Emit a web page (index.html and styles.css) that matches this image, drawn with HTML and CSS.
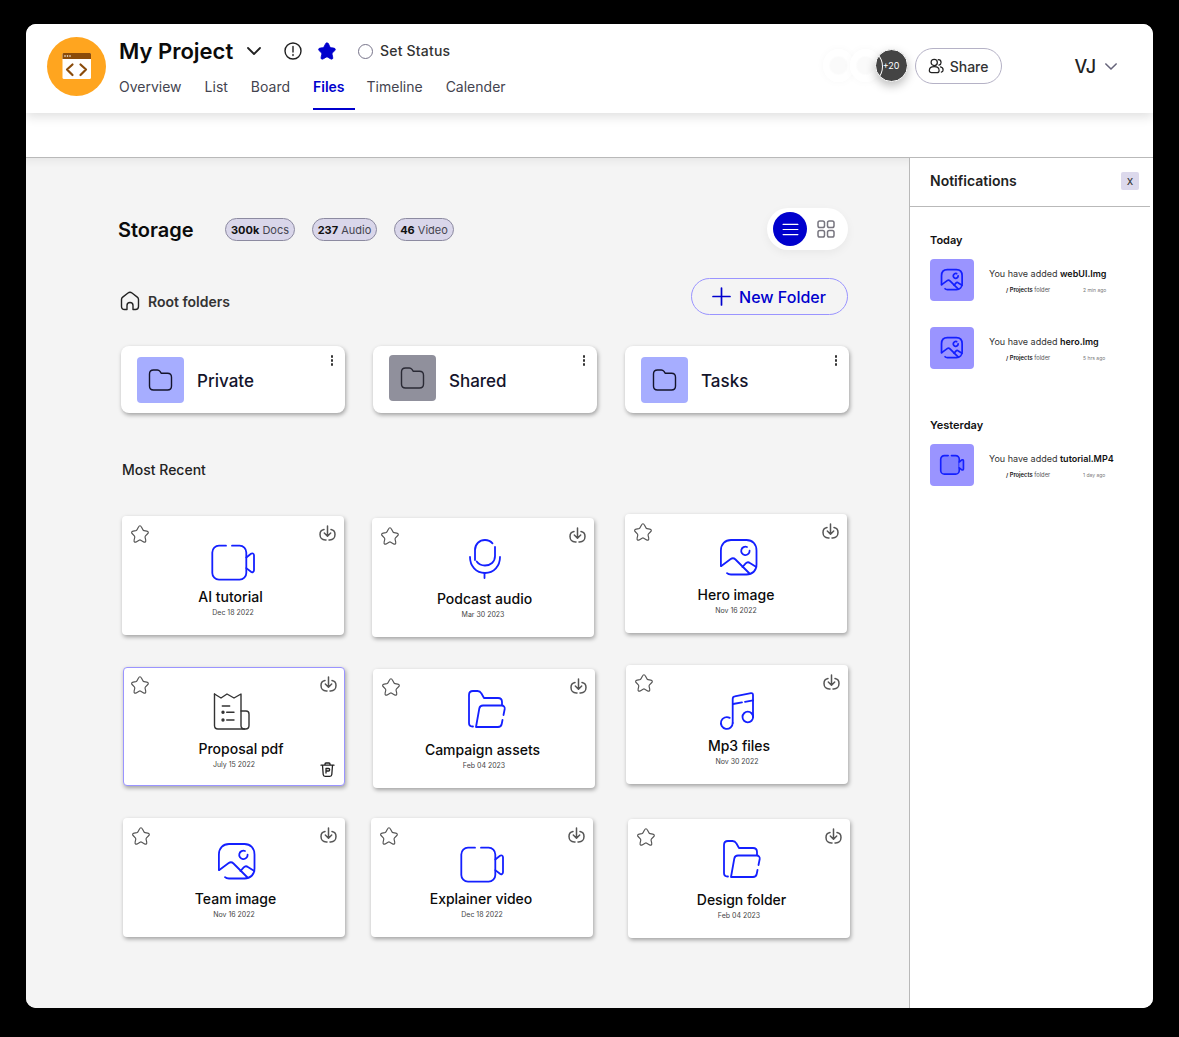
FILE: index.html
```html
<!DOCTYPE html>
<html lang="en">
<head>
    <meta charset="UTF-8">
    <meta name="viewport" content="width=device-width, initial-scale=1.0">
    <title>My Project - Files</title>
    <link rel="stylesheet" href="styles.css">
</head>
<body>
    <svg class="sprite" xmlns="http://www.w3.org/2000/svg">
        <symbol id="i-star" viewBox="0 0 24 24">
            <path d="M13.7 3.5l1.8 3.5c.2.5.9 1 1.4 1l3.2.5c2 .3 2.5 1.8 1 3.2l-2.5 2.5c-.4.4-.6 1.2-.5 1.8l.7 3.1c.6 2.5-.7 3.4-2.9 2.1l-3-1.8c-.5-.3-1.4-.3-2 0l-3 1.8c-2.2 1.3-3.5.4-2.9-2.1l.7-3.1c.1-.6-.1-1.4-.5-1.8L2.8 11.7c-1.5-1.4-1-2.9 1-3.2L7 8c.5-.1 1.2-.5 1.4-1l1.8-3.5c.9-1.9 2.6-1.9 3.5 0z"/>
        </symbol>
        <symbol id="i-download" viewBox="0 0 17 17">
            <path d="M8.5 1v10M5.3 8l3.2 3.2L11.7 8"/>
            <path d="M5 4.600C2.600 5 1 7 1 9.600c0 3.200 2.200 5.400 5.200 5.400h.8M12 4.600c2.400.4 4 2.400 4 5 0 3.200-2.200 5.400-5.200 5.400H10"/>
        </symbol>
        <symbol id="i-folder" viewBox="0 0 24 24">
            <path d="M1.500 6c0-2.500 1.500-4 4-4h3.800c1.200 0 2 .5 2.700 1.400l1.300 1.900h6.200c2.500 0 4 1.500 4 4v8.700c0 2.500-1.500 4-4 4H5.500c-2.500 0-4-1.500-4-4z"/>
        </symbol>
        <symbol id="i-video" viewBox="0 0 44 44">
            <path d="M15 4.700H8a6.700 6.700 0 0 0-6.700 6.700v20.600A6.700 6.700 0 0 0 8 38.700h20.600a6.700 6.700 0 0 0 6.700-6.700V11.400a6.700 6.700 0 0 0-6.700-6.700H21"/>
            <path d="M35.300 16.500l4.700-3.700c1.200-.9 3-.3 3 1.500v15c0 1.800-1.800 2.400-3 1.500l-4.700-3.700"/>
        </symbol>
        <symbol id="i-image" viewBox="0 0 44 44">
            <path d="M6.900 27V11.500C6.900 5 11 1 17 1h15.500c6 0 10 4 10 10.500v14c0 6-4 10-10 10H17c-1.800 0-3-.4-4-1.400"/>
            <path d="M7.300 27l9.400-6.900c1.500-1.100 3.400-.9 4.800.4L35.500 34.500"/>
            <path d="M28.500 28l3.200-3.600c1.200-1.300 3-1.400 4.200-.4l6.400 4"/>
            <path d="M33 8a4.200 4.200 0 1 0 2.600 3.700"/>
        </symbol>
        <symbol id="i-mic" viewBox="0 0 44 44">
            <path d="M14 17V7c0-6 4.500-10 10-10 3 0 5.500 1 7.500 3.300"/>
            <path d="M34 4v9c0 6-4.500 9.500-10 9.500-3.500 0-6.500-1.500-8.300-4"/>
            <path d="M9 14c0 9 6 16 15 16s15-7 15-16"/>
            <path d="M23.500 30v5"/>
        </symbol>
        <symbol id="i-open" viewBox="0 0 44 44">
            <path d="M11 32.500h-.5c-2.200 0-3.500-1.300-3.500-3.500V1c0-2.500 1.500-4 4-4h4.500c1.700 0 3 .8 3.800 2.300L22 4h14c2.500 0 4 1.500 4 4v3"/>
            <path d="M14 33h22c2 0 3.300-1 3.700-3l.8-4M41.500 21l1.200-6c.3-2-1-3.500-3-3.500H21c-2 0-3.300 1-3.700 3L14 33"/>
        </symbol>
        <symbol id="i-music" viewBox="0 0 44 44">
            <path d="M17.700 33a5.900 5.900 0 1 1-3-5.100"/>
            <path d="M17.700 33V9c0-1.500.8-2.400 2-2.600L36 3.200c1.200-.2 2 .5 2 1.800v22"/>
            <circle cx="32.800" cy="27" r="5.300"/>
            <path d="M18 14l9-1.600M30 11.800l8-1.500"/>
        </symbol>
        <symbol id="i-receipt" viewBox="0 0 44 44">
            <path d="M2.500 1v31.500c0 2.200 1.300 3.500 3.500 3.500h27.500c2.200 0 3.500-1.300 3.500-3.500V21c0-2-1-3-3-3h-5"/>
            <path d="M2.500 1l6.500 4 6-4 7 4 7-4v31.500c0 2.200 1.300 3.500 3.500 3.500"/>
            <path d="M10.300 13h7.400M14.700 19.300H22M14.700 27H22"/>
            <circle class="dot" cx="11" cy="19.300" r="1"/>
            <circle class="dot" cx="11" cy="27" r="1"/>
        </symbol>
    </svg>

    <div class="window">
        <header class="topbar">
            <svg class="logo" viewBox="0 0 59 59">
                <circle cx="29.500" cy="29.500" r="29.500" fill="#ffa51f"/>
                <rect x="15.500" y="16" width="28.500" height="26" rx="1.500" fill="#fff"/>
                <path d="M15.500 22v-4.500c0-1 .5-1.500 1.500-1.500h25.500c1 0 1.500.5 1.500 1.500V22z" fill="#8a4b0a"/>
                <path d="M25.500 27.500L20 32.500l5.500 5.500M33.500 27.500l5.500 5l-5.500 5.500" fill="none" stroke="#8a4b0a" stroke-width="2.200"/>
                <circle cx="18" cy="19" r=".8" fill="#fff"/><circle cx="20.500" cy="19" r=".8" fill="#fff"/><circle cx="23" cy="19" r=".8" fill="#fff"/>
            </svg>
            <div class="project">
                <div class="project-title">
                    <h1>My Project</h1>
                    <svg class="chev" viewBox="0 0 14 8"><path d="M1 1l6 6 6-6"/></svg>
                    <svg class="alert" viewBox="0 0 18 18"><circle cx="9" cy="9" r="8"/><path d="M9 4.500v5.500M9 12.500v1"/></svg>
                    <svg class="fav" viewBox="0 0 24 24"><use href="#i-star"/></svg>
                    <span class="radio"></span>
                    <span class="status">Set Status</span>
                </div>
                <nav class="tabs">
                    <a>Overview</a>
                    <a>List</a>
                    <a>Board</a>
                    <a class="active">Files</a>
                    <a>Timeline</a>
                    <a>Calender</a>
                </nav>
            </div>
            <div class="topbar-right">
                <div class="avatars">
                    <span class="avatar"></span>
                    <span class="avatar"></span>
                    <span class="avatar more">+20</span>
                </div>
                <button class="share">
                    <svg viewBox="0 0 18 18"><circle cx="7" cy="5" r="3.500"/><path d="M1.500 14c0-2.500 2.200-4.300 5.500-4.300s5.500 1.800 5.500 4.300c0 1.500-1 2.500-2.500 2.500H4c-1.500 0-2.500-1-2.500-2.500z"/><path d="M11.500 1.800c1.800 0 3.200 1.400 3.200 3.200 0 1.500-1 2.700-2.400 3M14 10c1.800.4 3 1.800 3 3.500 0 1.300-.8 2.200-2 2.500"/></svg>
                    Share
                </button>
                <span class="user">VJ</span>
                <svg class="chev user-chev" viewBox="0 0 14 8"><path d="M1 1l6 6 6-6"/></svg>
            </div>
        </header>
        <div class="strip"></div>

        <div class="content">
            <main class="main">
                <div class="storage-row">
                    <h2>Storage</h2>
                    <span class="pill pill-docs"><b>300k</b> Docs</span>
                    <span class="pill pill-audio"><b>237</b> Audio</span>
                    <span class="pill pill-video"><b>46</b> Video</span>
                    <div class="view-toggle">
                        <span class="view-btn">
                            <svg viewBox="0 0 18 14"><path d="M1 1.500h16M1 7h16M1 12.500h16"/></svg>
                        </span>
                        <svg class="view-grid" viewBox="0 0 18 18">
                            <rect x="1" y="1" width="6.500" height="6.500" rx="1.800"/><rect x="10.500" y="1" width="6.500" height="6.500" rx="1.800"/>
                            <rect x="1" y="10.500" width="6.500" height="6.500" rx="1.800"/><rect x="10.500" y="10.500" width="6.500" height="6.500" rx="1.800"/>
                        </svg>
                    </div>
                </div>

                <div class="root-row">
                    <svg class="house" viewBox="0 0 20 20"><path d="M7 18.500H4.500c-1.800 0-3-1.200-3-3V8.500c0-1 .4-1.800 1.200-2.400L8 2c1.200-.9 2.800-.9 4 0l5.300 4.100c.8.600 1.200 1.400 1.200 2.400v7c0 1.800-1.200 3-3 3H13v-4c0-1.700-1.300-3-3-3s-3 1.300-3 3z"/></svg>
                    <span class="root-label">Root folders</span>
                    <button class="new-folder">
                        <svg viewBox="0 0 18 18"><path d="M9 0v18M0 9h18"/></svg>
                        New Folder
                    </button>
                </div>

                <div class="folders">
                    <div class="folder-card">
                        <span class="folder-thumb"><svg><use href="#i-folder"/></svg></span>
                        <span class="folder-name">Private</span>
                        <span class="dots"><i></i><i></i><i></i></span>
                    </div>
                    <div class="folder-card shared">
                        <span class="folder-thumb"><svg><use href="#i-folder"/></svg></span>
                        <span class="folder-name">Shared</span>
                        <span class="dots"><i></i><i></i><i></i></span>
                    </div>
                    <div class="folder-card">
                        <span class="folder-thumb"><svg><use href="#i-folder"/></svg></span>
                        <span class="folder-name">Tasks</span>
                        <span class="dots"><i></i><i></i><i></i></span>
                    </div>
                </div>

                <h3 class="recent">Most Recent</h3>

                <div class="file-row row-a">
                    <div class="file-card">
                        <svg class="star"><use href="#i-star"/></svg>
                        <svg class="download"><use href="#i-download"/></svg>
                        <svg class="file-icon"><use href="#i-video"/></svg>
                        <div class="file-name">AI tutorial</div>
                        <div class="file-date">Dec 18 2022</div>
                    </div>
                    <div class="file-card">
                        <svg class="star"><use href="#i-star"/></svg>
                        <svg class="download"><use href="#i-download"/></svg>
                        <svg class="file-icon"><use href="#i-mic"/></svg>
                        <div class="file-name">Podcast audio</div>
                        <div class="file-date">Mar 30 2023</div>
                    </div>
                    <div class="file-card">
                        <svg class="star"><use href="#i-star"/></svg>
                        <svg class="download"><use href="#i-download"/></svg>
                        <svg class="file-icon"><use href="#i-image"/></svg>
                        <div class="file-name">Hero image</div>
                        <div class="file-date">Nov 16 2022</div>
                    </div>
                </div>

                <div class="file-row row-b">
                    <div class="file-card selected">
                        <svg class="star"><use href="#i-star"/></svg>
                        <svg class="download"><use href="#i-download"/></svg>
                        <svg class="file-icon dark"><use href="#i-receipt"/></svg>
                        <div class="file-name">Proposal pdf</div>
                        <div class="file-date">July 15 2022</div>
                        <svg class="trash" viewBox="0 0 15 15"><path d="M1 3.200h13M5 3V2c0-.7.4-1 1-1h3c.6 0 1 .3 1 1v1M2.500 3.200l.7 9.300c.1 1.200.8 1.800 2 1.800h4.600c1.200 0 1.900-.6 2-1.800l.7-9.300M6 11V6.500h2.500c.8 0 1.200.5 1.200 1.200S9.300 9 8.500 9H6"/></svg>
                    </div>
                    <div class="file-card">
                        <svg class="star"><use href="#i-star"/></svg>
                        <svg class="download"><use href="#i-download"/></svg>
                        <svg class="file-icon"><use href="#i-open"/></svg>
                        <div class="file-name">Campaign assets</div>
                        <div class="file-date">Feb 04 2023</div>
                    </div>
                    <div class="file-card">
                        <svg class="star"><use href="#i-star"/></svg>
                        <svg class="download"><use href="#i-download"/></svg>
                        <svg class="file-icon"><use href="#i-music"/></svg>
                        <div class="file-name">Mp3 files</div>
                        <div class="file-date">Nov 30 2022</div>
                    </div>
                </div>

                <div class="file-row row-c">
                    <div class="file-card">
                        <svg class="star"><use href="#i-star"/></svg>
                        <svg class="download"><use href="#i-download"/></svg>
                        <svg class="file-icon"><use href="#i-image"/></svg>
                        <div class="file-name">Team image</div>
                        <div class="file-date">Nov 16 2022</div>
                    </div>
                    <div class="file-card">
                        <svg class="star"><use href="#i-star"/></svg>
                        <svg class="download"><use href="#i-download"/></svg>
                        <svg class="file-icon"><use href="#i-video"/></svg>
                        <div class="file-name">Explainer video</div>
                        <div class="file-date">Dec 18 2022</div>
                    </div>
                    <div class="file-card">
                        <svg class="star"><use href="#i-star"/></svg>
                        <svg class="download"><use href="#i-download"/></svg>
                        <svg class="file-icon"><use href="#i-open"/></svg>
                        <div class="file-name">Design folder</div>
                        <div class="file-date">Feb 04 2023</div>
                    </div>
                </div>
            </main>

            <aside class="notes">
                <div class="notes-head">
                    <span class="notes-title">Notifications</span>
                    <button class="notes-close">x</button>
                </div>
                <div class="notes-body">
                    <div class="notes-day">Today</div>
                    <div class="note">
                        <span class="note-thumb"><svg viewBox="6 0 38 38"><use href="#i-image" width="44" height="44"/></svg></span>
                        <div class="note-text">
                            <p>You have added <b>webUI.Img</b></p>
                            <div class="note-sub"><span class="note-folder"><b>/ Projects</b> folder</span><span class="note-time">2 min ago</span></div>
                        </div>
                    </div>
                    <div class="note">
                        <span class="note-thumb"><svg viewBox="6 0 38 38"><use href="#i-image" width="44" height="44"/></svg></span>
                        <div class="note-text">
                            <p>You have added <b>hero.Img</b></p>
                            <div class="note-sub"><span class="note-folder"><b>/ Projects</b> folder</span><span class="note-time">5 hrs ago</span></div>
                        </div>
                    </div>
                    <div class="notes-day yesterday">Yesterday</div>
                    <div class="note">
                        <span class="note-thumb video"><svg viewBox="0 3 44 38"><use href="#i-video" width="44" height="44"/></svg></span>
                        <div class="note-text">
                            <p>You have added <b>tutorial.MP4</b></p>
                            <div class="note-sub"><span class="note-folder"><b>/ Projects</b> folder</span><span class="note-time">1 day ago</span></div>
                        </div>
                    </div>
                </div>
            </aside>
        </div>
    </div>
</body>
</html>
```

FILE: styles.css
```css
/* Reset */
* {
    margin: 0;
    padding: 0;
    box-sizing: border-box;
}

:root {
    --blue: #0000cd;
    --line-blue: #1420ff;
    --lilac: #9a94ff;
}

body {
    font-family: "Inter", "Liberation Sans", sans-serif;
    background: #000;
    color: #111;
    width: 1179px;
    height: 1037px;
    padding: 24px 26px 29px;
    overflow: hidden;
}

.sprite {
    display: none;
}

symbol {
    overflow: visible;
}

svg {
    display: block;
    fill: none;
    stroke: currentColor;
    stroke-linecap: round;
    stroke-linejoin: round;
    overflow: visible;
}

.window {
    height: 984px;
    background: #fff;
    border-radius: 10px;
    overflow: hidden;
    display: flex;
    flex-direction: column;
}

/* Top bar */
.topbar {
    height: 89px;
    display: flex;
    padding: 13px 36px 0 21px;
    background: #fff;
    box-shadow: 0 4px 10px rgba(0, 0, 0, 0.12);
    position: relative;
    z-index: 2;
}

.logo {
    width: 59px;
    height: 59px;
    flex: none;
    stroke: none;
}

.project {
    margin-left: 13px;
}

.project-title {
    height: 28px;
    display: flex;
    align-items: center;
}

h1 {
    font-size: 22px;
    font-weight: 600;
    color: #0b0b0b;
    width: 128px;
}

.chev {
    width: 14px;
    height: 8px;
    stroke-width: 1.8;
    color: #222;
}

.alert {
    width: 18px;
    height: 18px;
    margin-left: 23px;
    stroke-width: 1.4;
    color: #222;
}

.fav {
    width: 20px;
    height: 20px;
    margin-left: 15px;
    fill: var(--blue);
    color: var(--blue);
}

.radio {
    width: 15px;
    height: 15px;
    margin-left: 21px;
    border: 1px solid #77748a;
    border-radius: 50%;
}

.status {
    margin: -2px 0 0 7px;
    font-size: 14px;
    font-weight: 500;
    letter-spacing: 0.2px;
    color: #333;
}

.tabs {
    display: flex;
    gap: 23px;
    margin-top: 13px;
}

.tabs a {
    font-size: 14px;
    line-height: 17px;
    color: #44444f;
    padding-bottom: 13px;
    border-bottom: 2px solid transparent;
}

.tabs a.active {
    color: var(--blue);
    font-weight: 600;
    padding-right: 10px;
    margin-right: -11px;
    border-color: var(--blue);
}

.topbar-right {
    margin-left: auto;
    display: flex;
    align-items: center;
    height: 36px;
    margin-top: 11px;
}

.avatars {
    display: flex;
    align-items: center;
    margin-top: -2px;
}

.avatar {
    width: 31px;
    height: 33px;
    margin-left: -4px;
    border-radius: 50%;
    background: radial-gradient(circle, #fafafa 0 8px, #fff 10px);
    box-shadow: 0 0 8px rgba(0, 0, 0, 0.03);
}

.avatar.more {
    width: 33px;
    margin-left: -6px;
    background: #444;
    border: 1px solid #fff;
    color: #fff;
    font-size: 9px;
    display: flex;
    align-items: center;
    justify-content: center;
    box-shadow: 0 4px 10px rgba(0, 0, 0, 0.25);
    position: relative;
    overflow: hidden;
}

/* edge of the avatar behind, drawn across the dark one */
.avatar.more::before {
    content: "";
    position: absolute;
    top: -1px;
    left: -26px;
    width: 31px;
    height: 33px;
    border: 1px solid #fff;
    border-radius: 50%;
}

.share {
    margin-left: 7px;
    width: 87px;
    height: 36px;
    display: flex;
    align-items: center;
    justify-content: center;
    gap: 6px;
    background: #fff;
    border: 1px solid #b5b2c6;
    border-radius: 18px;
    font: 500 14px "Inter", sans-serif;
    color: #333;
}

.share svg {
    width: 16px;
    height: 16px;
    stroke-width: 1.4;
    color: #222;
}

.user {
    margin: 1px 0 0 73px;
    font-size: 18px;
    font-weight: 500;
    color: #222;
}

.user-chev {
    width: 12px;
    height: 7px;
    margin-left: 9px;
    color: #66647a;
}

.strip {
    height: 45px;
    flex: none;
    border-bottom: 1px solid #b9b9b9;
}

/* Main area */
.content {
    flex: 1;
    display: flex;
    min-height: 0;
}

.main {
    width: 883px;
    flex: none;
    padding: 50px 0 0 92px;
    background: #f4f4f4;
    box-shadow: inset 0 10px 10px -8px rgba(0, 0, 0, 0.07);
}

.storage-row {
    width: 730px;
    height: 42px;
    display: flex;
    align-items: center;
}

h2 {
    font-size: 20px;
    font-weight: 600;
    color: #0b0b0b;
    width: 107px;
    padding-top: 2px;
}

.pill {
    height: 23px;
    border: 1px solid #8c8aa0;
    border-radius: 12px;
    background: #d9d6ea;
    font-size: 11px;
    line-height: 22px;
    color: #44444f;
    text-align: center;
}

.pill b {
    color: #111;
    font-weight: 700;
}

.pill-docs { width: 70px; }
.pill-audio { width: 65px; margin-left: 17px; }
.pill-video { width: 60px; margin-left: 17px; }

.view-toggle {
    margin-left: auto;
    width: 81px;
    height: 42px;
    display: flex;
    align-items: center;
    padding-left: 6px;
    background: #fff;
    border-radius: 21px;
    box-shadow: 0 3px 10px rgba(0, 0, 0, 0.05);
}

.view-btn {
    width: 34px;
    height: 34px;
    border-radius: 50%;
    background: var(--blue);
    display: flex;
    align-items: center;
    justify-content: center;
    color: #fff;
}

.view-btn svg {
    width: 17px;
    height: 13px;
    stroke-width: 1.2;
}

.view-grid {
    width: 18px;
    height: 18px;
    margin-left: 10px;
    color: #77757f;
    stroke-width: 1.5;
}

.root-row {
    width: 730px;
    height: 37px;
    margin-top: 28px;
    display: flex;
    align-items: center;
}

.house {
    width: 20px;
    height: 20px;
    margin: 9px 0 0 2px;
    color: #222;
    stroke-width: 1.4;
}

.root-label {
    margin: 9px 0 0 8px;
    font-size: 14px;
    font-weight: 600;
    color: #333;
}

.new-folder {
    margin-left: auto;
    width: 157px;
    height: 37px;
    display: flex;
    align-items: center;
    justify-content: center;
    gap: 9px;
    background: transparent;
    border: 1px solid var(--lilac);
    border-radius: 19px;
    font: 500 16px "Inter", sans-serif;
    color: var(--blue);
}

.new-folder svg {
    width: 17px;
    height: 17px;
    stroke-width: 1.8;
}

.folders {
    display: flex;
    gap: 28px;
    margin: 31px 0 0 3px;
}

.folder-card {
    width: 224px;
    height: 67px;
    display: flex;
    align-items: center;
    padding-left: 16px;
    background: #fff;
    border-radius: 8px;
    box-shadow: 1px 2px 4px rgba(0, 0, 0, 0.35);
    position: relative;
}

.folder-thumb {
    width: 47px;
    height: 46px;
    border-radius: 4px;
    background: #a6adff;
    display: flex;
    align-items: center;
    justify-content: center;
    padding-right: 2px;
    color: #14142b;
}

.folder-thumb svg {
    width: 24px;
    height: 24px;
    stroke-width: 1.4;
}

.shared .folder-thumb {
    background: #90909c;
    color: #2a2a35;
    margin-top: -3px;
}

.folder-name {
    margin: 2px 0 0 13px;
    font-size: 17px;
    font-weight: 500;
    color: #14142b;
}

.dots {
    position: absolute;
    top: 9px;
    right: 12px;
    display: flex;
    flex-direction: column;
    gap: 1.5px;
}

.dots i {
    width: 2.5px;
    height: 2.5px;
    border-radius: 50%;
    background: #333;
}

.recent {
    margin: 48px 0 0 4px;
    font-size: 14px;
    line-height: 17px;
    font-weight: 500;
    color: #222;
}

/* File cards */
.file-row {
    display: flex;
    align-items: flex-start;
}

.row-a { margin-top: 36px; }
.row-b { margin-top: 28px; }
.row-c { margin-top: 30px; }

.file-card {
    width: 222px;
    height: 119px;
    flex: none;
    padding-top: 25px;
    display: flex;
    flex-direction: column;
    align-items: center;
    background: #fff;
    border-radius: 4px;
    box-shadow: 1px 2px 4px rgba(0, 0, 0, 0.35);
    position: relative;
}

.file-card.selected {
    border: 1px solid var(--lilac);
}

/* the cards sit a little unevenly in the mock */
.row-a .file-card:nth-child(1) { margin: 2px 0 0 4px; }
.row-a .file-card:nth-child(2) { margin: 4px 0 0 28px; }
.row-a .file-card:nth-child(3) { margin: 0 0 0 31px; }
.row-b .file-card:nth-child(1) { margin: 2px 0 0 5px; }
.row-b .file-card:nth-child(2) { margin: 4px 0 0 28px; }
.row-b .file-card:nth-child(3) { margin: 0 0 0 31px; }
.row-c .file-card:nth-child(1) { margin: 0 0 0 5px; }
.row-c .file-card:nth-child(2) { margin: 0 0 0 26px; }
.row-c .file-card:nth-child(3) { margin: 1px 0 0 35px; }

.row-a .file-card:nth-child(1) .file-name { margin-left: -5px; }
.row-a .file-card:nth-child(2) .file-name { margin-left: 3px; }
.row-b .file-card:nth-child(1) .file-name { margin-left: 14px; }
.row-b .file-card:nth-child(2) .file-name { margin-left: -3px; }
.row-b .file-card:nth-child(3) .file-name { margin-left: 4px; }
.row-c .file-card:nth-child(1) .file-name { margin-left: 3px; }
.row-c .file-card:nth-child(2) .file-name { margin-left: -2px; }
.row-c .file-card:nth-child(3) .file-name { margin-left: 5px; }

.star {
    position: absolute;
    top: 8px;
    left: 8px;
    width: 20px;
    height: 20px;
    color: #555;
    stroke-width: 1.4;
}

.selected .star {
    top: 7px;
    left: 6px;
}

.download {
    position: absolute;
    top: 9px;
    right: 8px;
    width: 17px;
    height: 17px;
    color: #555;
    stroke-width: 1.5;
}

.selected .download {
    top: 8px;
    right: 7px;
}

.trash {
    position: absolute;
    right: 9px;
    bottom: 8px;
    width: 15px;
    height: 15px;
    color: #222;
    stroke-width: 1.3;
}

.file-icon {
    width: 44px;
    height: 44px;
    flex: none;
    color: var(--line-blue);
    stroke-width: 1.8;
}

.file-icon.dark {
    color: #333;
    stroke-width: 1.4;
}

.dot {
    fill: currentColor;
}

.file-name {
    margin-top: 3px;
    font-size: 14px;
    line-height: 17px;
    font-weight: 500;
    color: #0b0b0b;
}

.file-date {
    margin-top: 3px;
    font-size: 7px;
    line-height: 10px;
    color: #444;
}

/* Notifications */
.notes {
    flex: 1;
    border-left: 1px solid #b9b9b9;
    background: #fff;
}

.notes-head {
    height: 49px;
    margin-right: 3px;
    display: flex;
    align-items: center;
    justify-content: space-between;
    padding: 0 11px 3px 20px;
    border-bottom: 1px solid #b9b9b9;
}

.notes-title {
    font-size: 14px;
    font-weight: 600;
    color: #222;
}

.notes-close {
    width: 18px;
    height: 18px;
    border: none;
    border-radius: 2px;
    background: #dcd9ec;
    font: 400 12px "Inter", sans-serif;
    color: #333;
}

.notes-body {
    padding: 27px 0 0 20px;
}

.notes-day {
    font-size: 11px;
    line-height: 13px;
    font-weight: 600;
    color: #111;
    margin-bottom: 12px;
}

.notes-day.yesterday {
    margin: 50px 0 12px;
}

.note {
    display: flex;
    margin-bottom: 26px;
}

.note:last-child {
    margin-bottom: 0;
}

.note-thumb {
    width: 44px;
    height: 42px;
    flex: none;
    border-radius: 4px;
    background: var(--lilac);
    display: flex;
    align-items: center;
    justify-content: center;
    color: #1420ff;
}

.note-thumb svg {
    width: 22px;
    height: 22px;
    stroke-width: 3;
}

.note-thumb.video svg {
    width: 24px;
    height: 22px;
    fill: #7f7fff;
}

.note-text {
    margin-left: 15px;
    padding-top: 8px;
}

.note-text p {
    font-size: 9px;
    line-height: 13px;
    color: #333;
    white-space: nowrap;
}

.note-text p b {
    font-weight: 600;
    color: #111;
}

.note-sub {
    display: flex;
    margin: 6px 0 0 17px;
    font-size: 5.8px;
    line-height: 8px;
    color: #555;
}

.note-sub b {
    font-weight: 600;
    color: #111;
}

.note-folder {
    width: 77px;
}

.note-time {
    font-size: 5px;
    color: #777;
}
```
